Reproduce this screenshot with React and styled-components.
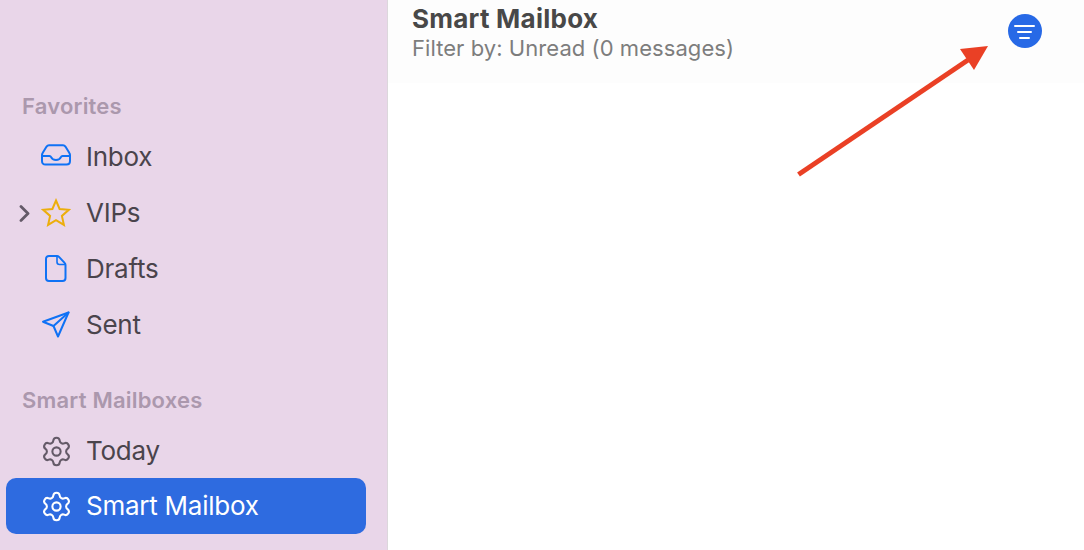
import React from 'react';
import styled, { createGlobalStyle } from 'styled-components';
import { Settings } from 'lucide-react';

const GlobalStyle = createGlobalStyle`
  html, body {
    margin: 0;
    padding: 0;
    background: #fff;
  }
  body {
    font-family: Inter, "Liberation Sans", sans-serif;
    -webkit-font-smoothing: antialiased;
  }
`;

const Window = styled.div`
  position: relative;
  display: flex;
  width: 1084px;
  height: 550px;
  overflow: hidden;
`;

const Sidebar = styled.aside`
  flex: 0 0 388px;
  height: 550px;
  padding-top: 94px;
  box-sizing: border-box;
  background: #e9d6e9;
  border-right: 1px solid #dcd7dc;
`;

const SectionLabel = styled.div`
  height: 24px;
  line-height: 24px;
  margin: ${({ $top }) => $top || 0}px 0 11px 22px;
  font-size: 22px;
  font-weight: 600;
  letter-spacing: 0.2px;
  color: #ab98ad;
`;

const Row = styled.div`
  display: flex;
  align-items: center;
  width: 360px;
  height: 56px;
  margin: ${({ $active }) => ($active ? -1 : 0)}px 0 0 6px;
  padding-left: 13px;
  box-sizing: border-box;
  border-radius: 10px;
  background: ${({ $active }) => ($active ? '#2e6be0' : 'transparent')};
  color: ${({ $active }) => ($active ? '#fff' : '#4a444c')};
`;

const ChevronSlot = styled.div`
  flex: 0 0 22px;
  display: flex;
  align-items: center;
`;

const IconSlot = styled.div`
  flex: 0 0 30px;
  min-width: 0;
  height: 30px;
  display: flex;
  align-items: center;
  justify-content: center;
  margin-right: 15px;
  color: ${({ $color }) => $color || 'inherit'};

  svg {
    flex: none;
  }
`;

const RowLabel = styled.span`
  margin-bottom: 2px;
  font-size: 26px;
  letter-spacing: -0.25px;
`;

const Main = styled.main`
  flex: 1;
  background: #fff;
`;

const Header = styled.header`
  display: flex;
  justify-content: space-between;
  height: 83px;
  padding: 4px 42px 0 24px;
  box-sizing: border-box;
  background: #fdfdfd;
`;

const Titles = styled.div`
  display: flex;
  flex-direction: column;
`;

const Title = styled.h1`
  margin: 0;
  font-size: 26px;
  line-height: 30px;
  font-weight: 700;
  letter-spacing: 0.25px;
  color: #484848;
`;

const Subtitle = styled.div`
  font-size: 22px;
  line-height: 29px;
  letter-spacing: 0.06px;
  color: #7d7d7d;
`;

const FilterButton = styled.button`
  width: 34px;
  height: 34px;
  margin-top: 10px;
  padding: 1px 0 0;
  border: 0;
  border-radius: 50%;
  display: flex;
  align-items: center;
  justify-content: center;
  background: #2769e6;
`;

const Arrow = styled.svg`
  position: absolute;
  left: 790px;
  top: 40px;
`;

const InboxIcon = () => (
  <svg width="30" height="30" viewBox="0 0 30 30" fill="none" stroke="currentColor" strokeWidth="2" strokeLinejoin="round">
    <path d="M8 3.300h14c1 0 1.800.4 2.400 1.300l4 6.500c.4.6.6 1.200.6 2V19c0 2.300-1.200 3.500-3.500 3.500h-21C2.200 22.500 1 21.300 1 19v-5.900c0-.8.2-1.400.6-2l4-6.500C6.200 3.700 7 3.300 8 3.300z" />
    <path d="M1 14h7.500c1 0 1.300.5 1.600 1.200.7 1.600 2.500 2.800 4.900 2.800s4.200-1.200 4.900-2.800c.3-.7.6-1.200 1.600-1.200H29" />
  </svg>
);

const StarIcon = () => (
  <svg width="30" height="30" viewBox="0 0 30 30" fill="none" stroke="currentColor" strokeWidth="2" strokeLinejoin="miter">
    <path d="M15 2.500L18.600 11 27.800 11.800 20.900 17.900 22.900 26.900 15 22.200 7.100 26.900 9.100 17.900 2.200 11.800 11.400 11z" />
  </svg>
);

const DraftIcon = () => (
  <svg width="30" height="30" viewBox="0 0 30 30" fill="none" stroke="currentColor" strokeWidth="2" strokeLinejoin="round">
    <path d="M8 2h8c.8 0 1.400.3 2 .9l5.600 6c.6.6.9 1.200.9 2V24c0 1.800-1.200 3-3 3H8c-1.800 0-3-1.200-3-3V5c0-1.800 1.200-3 3-3z" />
    <path d="M16 2v6c0 1.500.8 2.500 2.500 2.500H24.500" strokeWidth="1.600" />
  </svg>
);

const SentIcon = () => (
  <svg width="30" height="30" viewBox="0 0 30 30" fill="none" stroke="currentColor" strokeWidth="2" strokeLinejoin="round" strokeLinecap="round">
    <path d="M27.500 2.500L2 11.700l10.500 4.300 4.500 10.500z" />
    <path d="M12.500 16L27.500 2.500" />
  </svg>
);

const FilterGlyph = () => (
  <svg width="22" height="16" viewBox="0 0 22 16" fill="none" stroke="#fff" strokeWidth="2" strokeLinecap="round">
    <path d="M1 2h19M4 8h13M6 14h9" />
  </svg>
);

const Chevron = () => (
  <svg width="11" height="17" viewBox="0 0 11 17" fill="none" stroke="#645a68" strokeWidth="2.800" strokeLinecap="round" strokeLinejoin="round">
    <path d="M2 1.500l7 7-7 7" />
  </svg>
);

const gear = <Settings size={33} strokeWidth={1.5} />;

const favorites = [
  { label: 'Inbox', icon: <InboxIcon />, color: '#0f72f5' },
  { label: 'VIPs', icon: <StarIcon />, color: '#ecae0c', expandable: true },
  { label: 'Drafts', icon: <DraftIcon />, color: '#0f72f5' },
  { label: 'Sent', icon: <SentIcon />, color: '#0f72f5' },
];

const SidebarRow = ({ label, icon, color, expandable, active }) => (
  <Row $active={active}>
    <ChevronSlot>{expandable && <Chevron />}</ChevronSlot>
    <IconSlot $color={color}>{icon}</IconSlot>
    <RowLabel>{label}</RowLabel>
  </Row>
);

export default function App() {
  return (
    <Window>
      <GlobalStyle />
      <Sidebar>
        <SectionLabel>Favorites</SectionLabel>
        {favorites.map((item) => (
          <SidebarRow key={item.label} {...item} />
        ))}
        <SectionLabel $top={35}>Smart Mailboxes</SectionLabel>
        <SidebarRow label="Today" icon={gear} color="#645a68" />
        <SidebarRow label="Smart Mailbox" icon={gear} active />
      </Sidebar>
      <Main>
        <Header>
          <Titles>
            <Title>Smart Mailbox</Title>
            <Subtitle>Filter by: Unread (0 messages)</Subtitle>
          </Titles>
          <FilterButton aria-label="Filter">
            <FilterGlyph />
          </FilterButton>
        </Header>
      </Main>
      <Arrow width="204" height="140" viewBox="790 40 204 140">
        <path d="M798.500 174.500L968 60" stroke="#ea4025" strokeWidth="5" fill="none" />
        <path d="M988 46l-28 3 14 21z" fill="#ea4025" />
      </Arrow>
    </Window>
  );
}
